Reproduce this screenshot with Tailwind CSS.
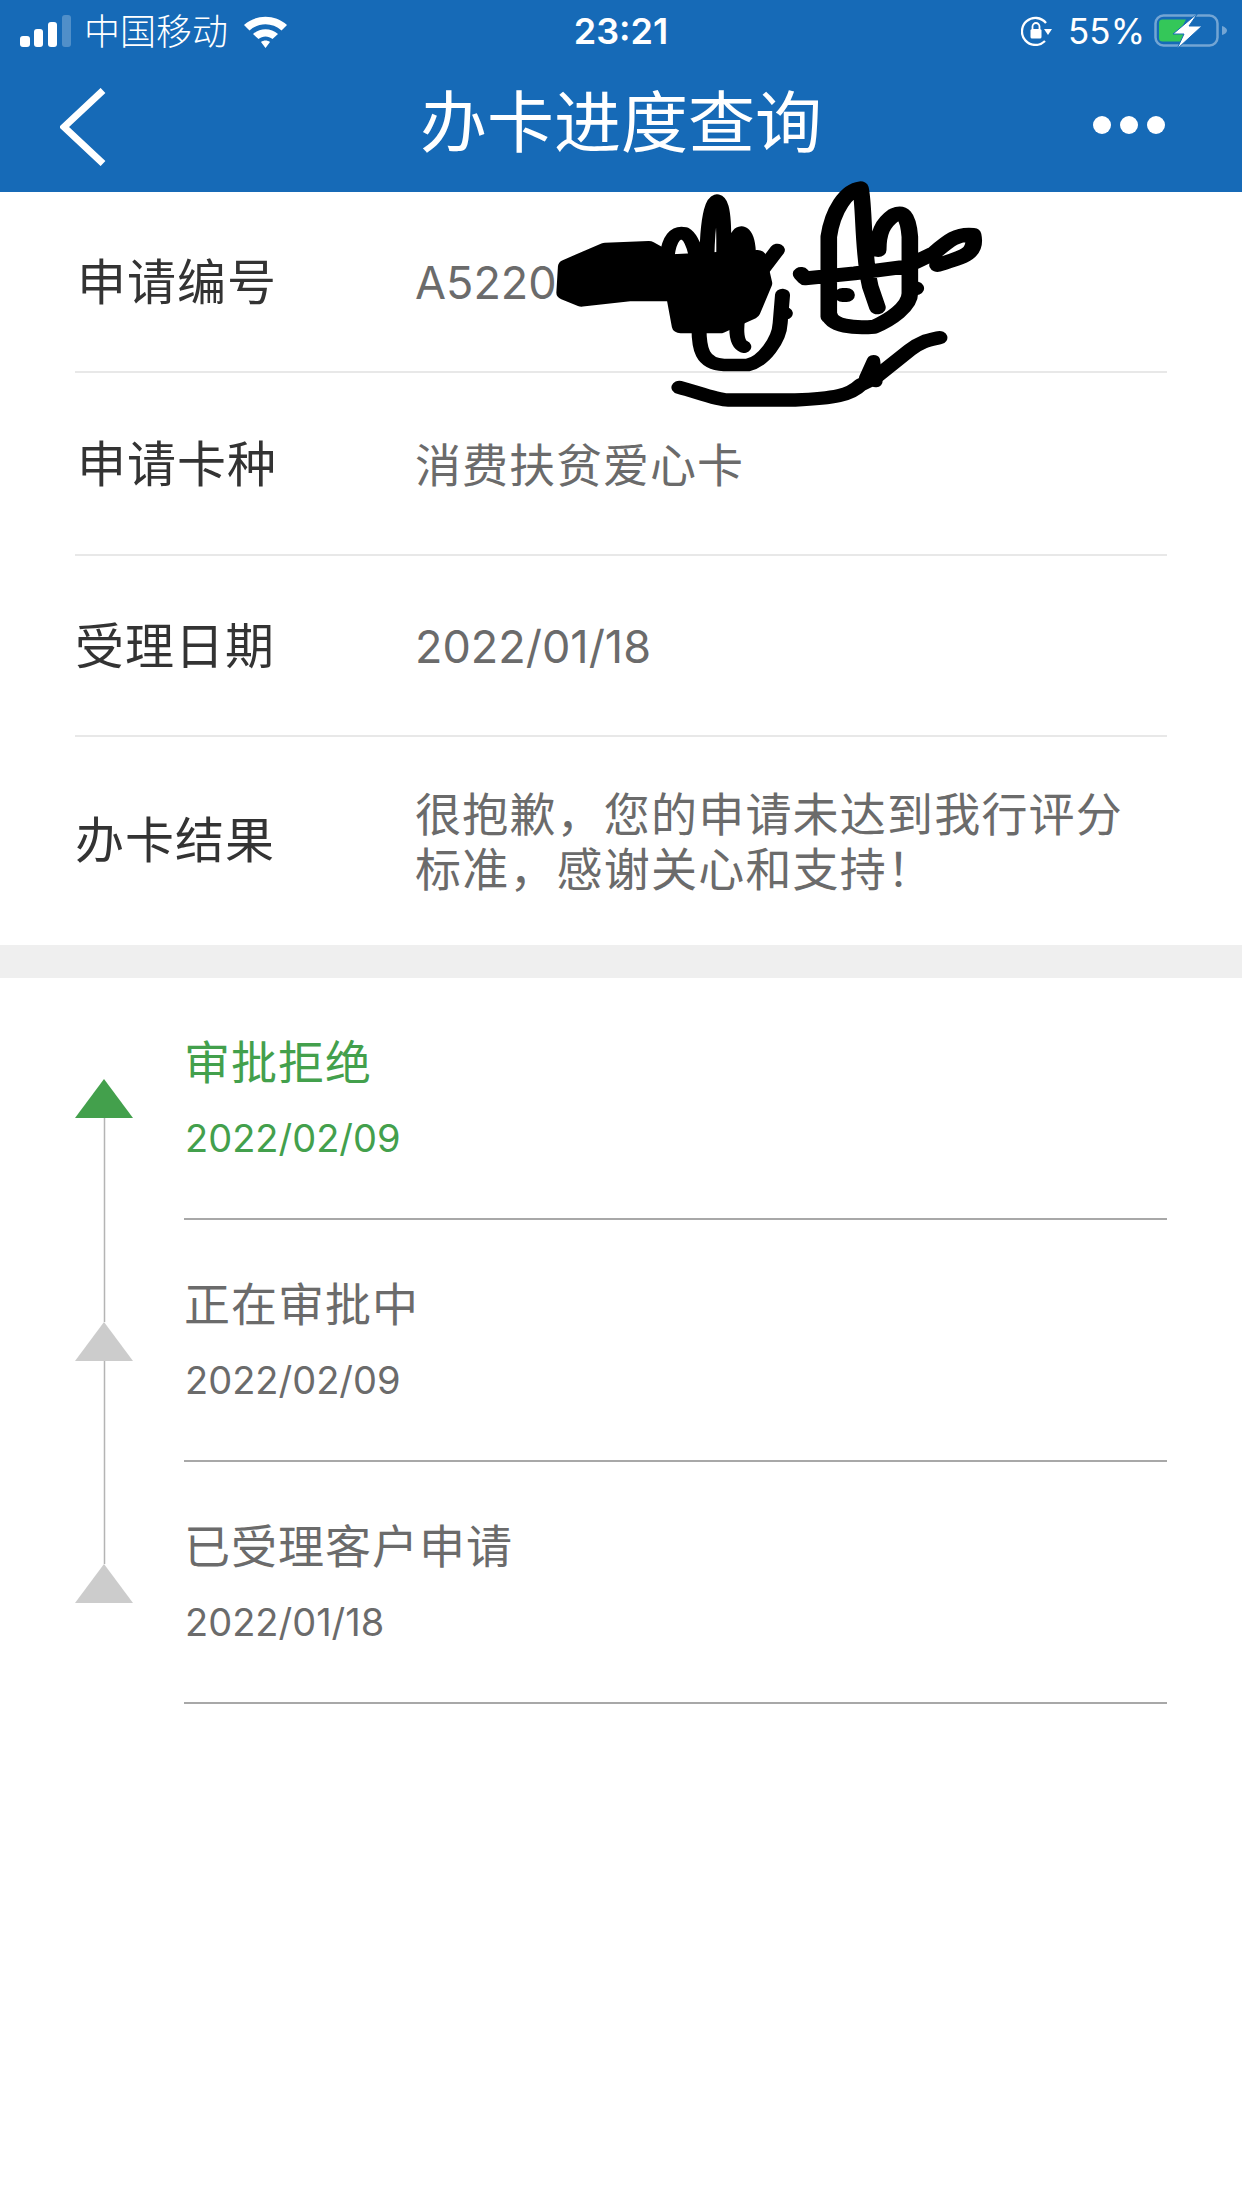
<!DOCTYPE html>
<html lang="zh-CN">
<head>
<meta charset="utf-8">
<script src="https://cdn.jsdelivr.net/npm/@tailwindcss/browser@4"></script>
</head>
<body class="m-0 bg-white">
<div class="relative w-[1242px] h-[2208px] overflow-hidden bg-white font-['Inter','Noto_Sans_CJK_SC',sans-serif]">
  <header class="h-[192px] bg-[#166ab7] text-white flex flex-col">
    <div class="h-[62px] grid grid-cols-[1fr_auto_1fr] items-center px-[15px]">
      <div class="flex items-center pl-[5px]">
        <svg class="w-[51px] h-[32px]" viewBox="0 0 51 32"><rect x="0" y="21" width="10" height="11" rx="3" fill="#fff"/><rect x="14" y="14" width="9" height="18" rx="3" fill="#fff"/><rect x="28" y="7" width="9" height="25" rx="3" fill="#fff"/><rect x="42" y="0" width="9" height="32" rx="3" fill="#fff" fill-opacity=".25"/></svg>
        <span class="ml-[13px] mb-[5px] text-[36px] leading-none font-['Noto_Sans_CJK_SC'] font-light">中国移动</span>
        <svg class="ml-[15px] w-[45px] h-[34px]" viewBox="0 0 45 34"><path d="M1 11C13 0 32 0 44 11L38.500 16.500C29.500 8 15.500 8 6.500 16.500Z M10 20C17 13.500 28 13.500 35 20L29.500 25C25.500 21.500 19.500 21.500 15.500 25Z M18 28C20.500 26 24.500 26 27 28L22.500 34Z" fill="#fff"/></svg>
      </div>
      <span class="text-[36px] leading-none font-semibold">23:21</span>
      <div class="flex items-center justify-end">
        <svg class="w-[31px] h-[30px]" viewBox="0 0 31 30"><path d="M24 25A13.500 13.500 0 1 1 25 7" fill="none" stroke="#fff" stroke-width="2.300"/><path d="M23 13H31L27 19Z" fill="#fff"/><rect x="9.500" y="13" width="11" height="9.500" rx="1.500" fill="#fff"/><path d="M11.500 13V10.500A3.500 3.500 0 0 1 18.500 10.500V13" fill="none" stroke="#fff" stroke-width="1.800"/></svg>
        <span class="ml-[16px] text-[35px] leading-none">55%</span>
        <svg class="ml-[9px] w-[73px] h-[36px] shrink-0" viewBox="0 0 73 36"><rect x="1.500" y="2.500" width="62" height="30" rx="8" fill="none" stroke="#fff" stroke-opacity=".4" stroke-width="2.500"/><path d="M5 10Q5 6.500 8.500 6.500H32L25 20H30V28.500H8.500Q5 28.500 5 25Z" fill="#34c759"/><path d="M68 13V22C71 21 73 19.500 73 17.500S71 14 68 13Z" fill="#fff" fill-opacity=".4"/><path d="M44 0L19 21H30L23 36L48 13H35Z" fill="#fff" stroke="#166ab7" stroke-width="1"/></svg>
      </div>
    </div>
    <div class="flex-1 grid grid-cols-[1fr_auto_1fr] items-center px-[60px] pb-[10px]">
      <svg class="mt-[10px] w-[46px] h-[78px]" viewBox="0 0 46 78"><path d="M43 2.500L4 39L43 75.500" fill="none" stroke="#fff" stroke-width="7"/></svg>
      <h1 class="text-[67px] leading-none font-normal">办卡进度查询</h1>
      <svg class="mt-[6px] mr-[17px] justify-self-end w-[72px] h-[18px]" viewBox="0 0 72 18"><circle cx="9" cy="9" r="9" fill="#fff"/><circle cx="36" cy="9" r="9" fill="#fff"/><circle cx="63" cy="9" r="9" fill="#fff"/></svg>
    </div>
  </header>

  <section class="px-[75px] text-[#6b6b6b]">
    <div class="h-[181px] pt-[3px] flex items-center border-b-2 border-[#e8e8e8]">
      <span class="w-[340px] pl-[2px] text-[49px] tracking-[1px] text-[#333]">申请编号</span>
      <span class="text-[45px]">A5220</span>
    </div>
    <div class="h-[183px] pt-[3px] flex items-center border-b-2 border-[#e8e8e8]">
      <span class="w-[340px] pl-[2px] text-[49px] tracking-[1px] text-[#333]">申请卡种</span>
      <span class="text-[46px] tracking-[1px]">消费扶贫爱心卡</span>
    </div>
    <div class="h-[181px] pt-[3px] flex items-center border-b-2 border-[#e8e8e8]">
      <span class="w-[340px] text-[49px] tracking-[1px] text-[#333]">受理日期</span>
      <span class="text-[45px]">2022/01/18</span>
    </div>
    <div class="h-[208px] flex items-center">
      <span class="w-[340px] text-[49px] tracking-[1px] text-[#333]">办卡结果</span>
      <p class="w-[740px] pt-[1px] text-[46px] leading-[55px] tracking-[1.200px]">很抱歉，您的申请未达到我行评分标准，感谢关心和支持！</p>
    </div>
  </section>

  <div class="h-[33px] bg-[#efefef]"></div>

  <ol class="relative pl-[184px] pr-[75px]">
    <li class="h-[242px] border-b-2 border-[#a8a8a8] pt-[52px] text-[#43a04c]">
      <p class="text-[46px] leading-[64px] tracking-[1px]">审批拒绝</p>
      <p class="pl-[1px] mt-[19px] text-[38px] leading-[50px]">2022/02/09</p>
    </li>
    <li class="h-[242px] border-b-2 border-[#a8a8a8] pt-[52px] text-[#6b6b6b]">
      <p class="text-[46px] leading-[64px] tracking-[1px]">正在审批中</p>
      <p class="pl-[1px] mt-[19px] text-[38px] leading-[50px]">2022/02/09</p>
    </li>
    <li class="h-[242px] border-b-2 border-[#a8a8a8] pt-[52px] text-[#6b6b6b]">
      <p class="text-[46px] leading-[64px] tracking-[1px]">已受理客户申请</p>
      <p class="pl-[1px] mt-[19px] text-[38px] leading-[50px]">2022/01/18</p>
    </li>
    <svg class="absolute left-[75px] top-[101px] w-[58px] h-[524px]" viewBox="0 0 58 524">
      <path d="M29.500 39V243M29.500 282V485" stroke="#b4b4b4" stroke-width="1.500"/>
      <path d="M29 0L58 39H0Z" fill="#43a04c"/>
      <path d="M29 243L58 282H0Z" fill="#ccc"/>
      <path d="M29 485L58 524H0Z" fill="#ccc"/>
    </svg>
  </ol>

  <svg class="absolute left-[380px] top-[170px] w-[620px] h-[260px]" viewBox="0 0 1568 780" preserveAspectRatio="none" fill="none" stroke="#000" stroke-linecap="round" stroke-linejoin="round">
    <path fill="#000" stroke-width="44" d="M472 290L570 240L680 235L740 275L955 262L970 340L940 425L860 468L760 468L745 372L630 372L510 388L468 368Z"/>
    <path stroke-width="38" d="M725 270C730 200 750 185 770 190C800 210 810 300 810 400M832 400C820 250 830 100 852 92C880 100 865 300 870 400M890 400C900 300 890 190 915 188C940 200 930 300 932 400M1005 240L960 310M807 460C805 540 815 582 870 585L930 585C970 575 1010 510 1012 460L1018 375M1018 425L1025 430M905 440C900 480 900 520 920 530"/>
    <path stroke-width="42" d="M1135 440V200C1145 120 1180 60 1215 55C1225 100 1220 250 1240 350L1258 412M1135 430C1140 470 1200 475 1250 470C1290 450 1340 410 1340 370V200C1335 130 1320 125 1300 135C1270 160 1260 190 1260 240M1065 312L1075 325L1200 310L1330 290L1400 250C1440 210 1460 190 1500 195C1510 250 1480 260 1410 285M1180 375L1170 375M1355 355L1340 350"/>
    <path stroke-width="40" d="M757 652C800 665 850 690 880 690H1050C1150 685 1190 675 1215 645L1250 625L1340 540C1370 512 1390 510 1415 503"/>
    <path stroke-width="34" d="M1228 625L1248 572L1254 635"/>
  </svg>
</div>
</body>
</html>
